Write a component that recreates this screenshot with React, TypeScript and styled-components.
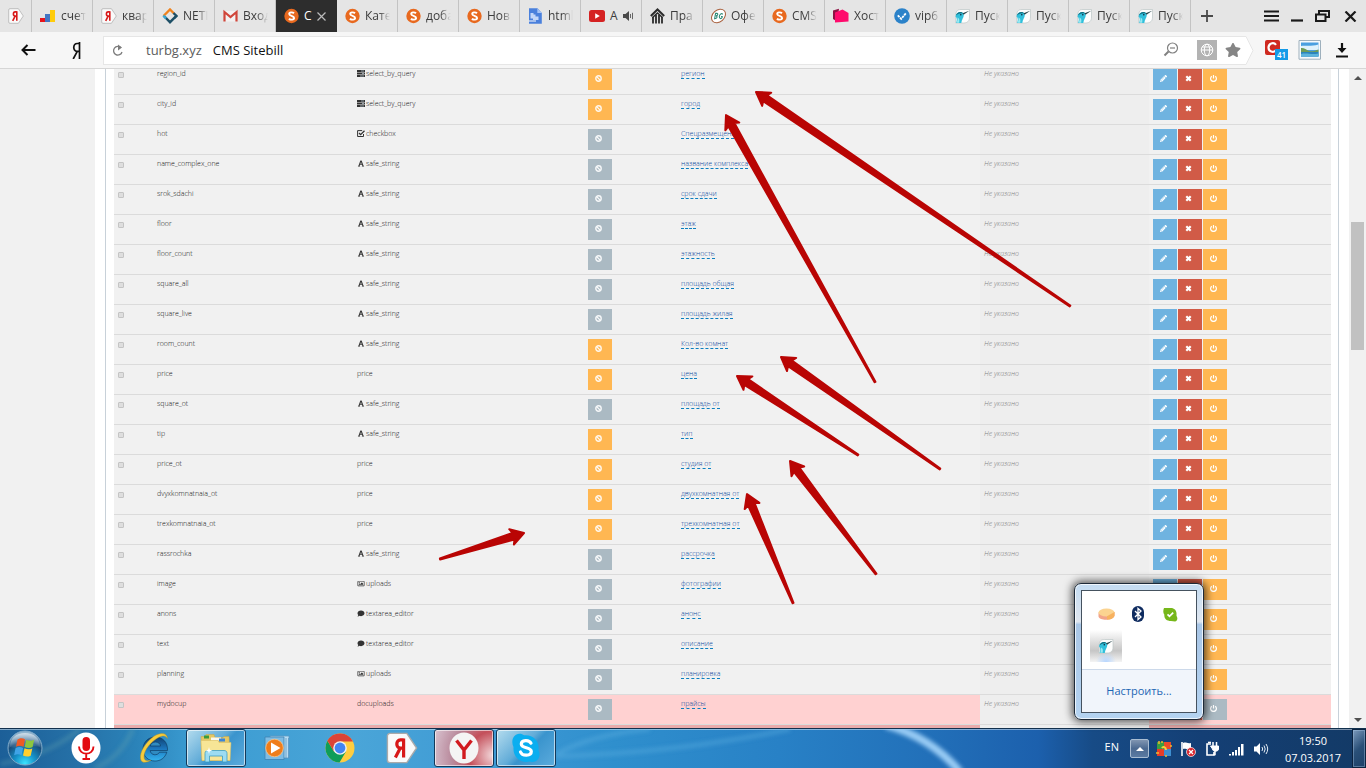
import React from 'react';
import styled, { createGlobalStyle, css } from 'styled-components';
import {
  FaPencilAlt,
  FaFont,
  FaRegImage,
  FaComment,
  FaStar,
} from 'react-icons/fa';

const GlobalStyle = createGlobalStyle`
  * { box-sizing: border-box; }
  body { margin: 0; overflow: hidden; background: #fff; }
  button, input { font: inherit; color: inherit; }
  button { border: 0; padding: 0; background: none; cursor: pointer; }
  svg { display: block; flex: none; }
`;

const uiFont = css`font-family: 'Open Sans', 'Noto Sans', sans-serif;`;

const Screen = styled.div`
  position: relative;
  display: flex;
  flex-direction: column;
  height: 100vh;
  overflow: hidden;
  ${uiFont}
`;

/* ---------- browser tabs ---------- */

const TabStrip = styled.header`
  display: flex;
  flex: none;
  height: 32px;
  background: #e5e5e5;
`;

const Tab = styled.button<{ $active?: boolean; $pinned?: boolean }>`
  display: flex;
  align-items: center;
  flex: none;
  gap: 5px;
  width: ${p => (p.$pinned ? 32 : 61)}px;
  padding-left: 8px;
  border-right: 1px solid ${p => (p.$active ? '#2d2d2d' : '#c3c3c3')};
  background: ${p => (p.$active ? '#2d2d2d' : 'transparent')};
  color: ${p => (p.$active ? '#fff' : '#3c3c3c')};
  font-size: 12px;
  line-height: 18px;
  text-align: left;
`;

const TabTitle = styled.span<{ $short?: boolean }>`
  width: ${p => (p.$short ? 8 : 30)}px;
  white-space: nowrap;
  mask-image: ${p => (p.$short ? 'none' : 'linear-gradient(90deg, #000 14px, transparent 25px)')};
`;

const StripButton = styled.button`
  display: flex;
  align-items: center;
  justify-content: center;
  width: 32px;
  height: 32px;
`;

const WindowControls = styled.div`
  display: flex;
  align-items: center;
  gap: 11px;
  margin-left: auto;
  padding-right: 6px;
`;

const IconButton = styled.button`
  display: flex;
  align-items: center;
  justify-content: center;
  flex: none;
`;

/* ---------- address bar ---------- */

const Toolbar = styled.div`
  display: flex;
  align-items: center;
  flex: none;
  height: 37px;
  padding: 0 16px 0 21px;
  border-bottom: 1px solid #d6d6d6;
  background: #f6f6f6;
`;

const BackButton = styled(IconButton)`width: 15px;`;
const HomeButton = styled(IconButton)`
  width: 10px;
  margin: 0 22px 0 35px;
`;

const AddressBar = styled.div`
  display: flex;
  align-items: center;
  flex: 1;
  height: 29px;
  padding: 0 5px 0 8px;
  border: 1px solid #e6e6e6;
  border-right: 0;
  background: #fff;
  font-size: 13px;
  line-height: 20px;
`;

const Host = styled.label`
  margin: 0 11px 0 22px;
  color: #5c5c5c;
`;

const AddressInput = styled.input`
  flex: 1;
  min-width: 0;
  padding: 0;
  border: 0;
  outline: 0;
  background: none;
  color: #111;
`;

const AddressTools = styled.div`
  display: flex;
  align-items: center;
  gap: 8px;
`;

const TranslateButton = styled(IconButton)`
  width: 20px;
  height: 20px;
  margin-left: 10px;
  background: #b3b3b3;
`;

const Extensions = styled.div`
  display: flex;
  align-items: center;
  gap: 10px;
  margin-left: 11px;
`;

const BadgeHolder = styled(IconButton)`
  position: relative;
  width: 23px;
  height: 20px;
  justify-content: flex-start;
  align-items: flex-start;
`;

const CountBadge = styled.span`
  position: absolute;
  right: 0;
  bottom: 0;
  width: 13px;
  height: 11px;
  background: #149ae8;
  color: #fff;
  font-size: 8px;
  font-weight: 600;
  line-height: 11px;
  text-align: center;
`;

/* ---------- page ---------- */

const Viewport = styled.main`
  display: flex;
  flex: 1;
  min-height: 0;
  overflow: hidden;
`;

const Sidebar = styled.aside`
  flex: none;
  width: 95px;
  background: #f1f1f1;
`;

const Panel = styled.section`
  flex: 1;
  margin: 0 10px;
  padding: 0 7px 0 8px;
  border: solid #c8d1d9;
  border-width: 0 1px;
  overflow: hidden;
`;

const Table = styled.table`
  width: 100%;
  margin-top: -5px;
  border-spacing: 0;
  table-layout: fixed;
  background: #f1f1f1;
  color: #111;
  font-size: 7px;
  font-weight: 300;
  line-height: 9px;
`;

const Col = styled.col<{ $w?: number }>`
  width: ${p => (p.$w ? p.$w + 'px' : 'auto')};
`;

type Tone = 'plain' | 'pink' | 'rose';
const toneColor: Record<Tone, string> = { plain: '#f1f1f1', pink: '#ffd1d1', rose: '#e9abab' };

const Row = styled.tr<{ $tone: Tone }>`
  background: ${p => toneColor[p.$tone]};
`;

const Cell = styled.td<{ $muted?: boolean }>`
  height: 30px;
  padding: 4px;
  border-top: 1px solid #dbdbdb;
  vertical-align: top;
  white-space: nowrap;
  background: ${p => (p.$muted ? '#eee' : 'transparent')};
`;

const RowCheck = styled.input`
  display: block;
  width: 6px;
  height: 6px;
  margin: 3px 0 0;
  appearance: none;
  border: 1px solid #c4c4c4;
  border-radius: 1px;
  background: #dedede;
`;

const FieldType = styled.span`
  display: flex;
  align-items: center;
  gap: 1px;
  svg { width: 8px; height: 7px; color: #333; }
`;

const EditLink = styled.a`
  display: inline-block;
  border-bottom: 1px dashed #0b7fc0;
  color: #0a479c;
  text-decoration: none;
`;

const Empty = styled.em`color: #808080;`;

const ButtonGroup = styled.div`
  display: flex;
  gap: 1px;
`;

const actionColor = { blue: '#6fb3e0', red: '#d15b47', orange: '#ffb752', grey: '#abbac3' };

const ActionButton = styled.button<{ $color: keyof typeof actionColor }>`
  display: flex;
  align-items: center;
  width: 24px;
  height: 21px;
  padding: 0 0 2px 7px;
  background: ${p => actionColor[p.$color]};
  color: #fff;
  svg { width: 7px; height: 7px; }
`;

const Scrollbar = styled.div`
  display: flex;
  flex-direction: column;
  align-items: center;
  flex: none;
  width: 17px;
  background: #f1f1f1;
`;

const ScrollButton = styled(IconButton)`
  width: 17px;
  height: 17px;
`;

const ScrollSpace = styled.div<{ $grow: number }>`flex: ${p => p.$grow} 1 0;`;

const ScrollThumb = styled.div`
  flex: 128 1 0;
  width: 13px;
  background: #c1c1c1;
`;

const Annotations = styled.svg`
  position: absolute;
  inset: 0;
  width: 100%;
  height: 100%;
  pointer-events: none;
`;

/* ---------- tray popup ---------- */

const TrayPopup = styled.div`
  position: absolute;
  right: 162px;
  bottom: 48px;
  width: 130px;
  height: 137px;
  padding: 6px;
  border: 1px solid #1d2a38;
  border-radius: 7px;
  background: linear-gradient(#c4dcf2, #dfe6ef 28%, #a9c6e6 30%, #b4d3f1);
  box-shadow: 0 0 9px 2px rgba(0, 0, 0, 0.65), inset 0 0 0 1px rgba(255, 255, 255, 0.75);
`;

const TrayInner = styled.div`
  display: flex;
  flex-direction: column;
  height: 100%;
  border: 1px solid #45525f;
  background: #fff;
`;

const TrayGrid = styled.div`
  display: grid;
  grid-template-columns: repeat(3, 32px);
  grid-auto-rows: 32px;
  flex: 1;
  padding: 7px 8px 0;
`;

const TrayItem = styled.button<{ $hot?: boolean }>`
  display: flex;
  align-items: center;
  justify-content: center;
  background: ${p =>
    p.$hot
      ? 'radial-gradient(circle at 50% 100%, #b7d6ff 0, transparent 28%), linear-gradient(#fff, #c6c6c6 65%, #f4f4f4)'
      : 'none'};
`;

const TrayFooter = styled.div`
  display: flex;
  align-items: center;
  justify-content: center;
  height: 43px;
  border-top: 1px solid #ccd9ea;
  background: #f1f5fb;
`;

const TrayLink = styled.a`
  color: #1c66b4;
  font-size: 11px;
  line-height: 16px;
  text-decoration: none;
`;

/* ---------- taskbar ---------- */

const Taskbar = styled.footer`
  position: relative;
  display: flex;
  flex: none;
  height: 40px;
  border-top: 1px solid #12304d;
  background: linear-gradient(90deg, #1c5f98 0, #2672a8 6%, #2b83b9 10%, #3a9bd1 14%, #4aa5d8 26%, #3b97d3 38%, #2f8fcd 45%, #2881c6 57%, #2270b9 68%, #1c60ad 76%, #174b86 80%, #143f75 88%, #133a66 100%);
  box-shadow: inset 0 1px rgba(255, 255, 255, 0.45);
  color: #fff;
`;

const TaskbarArt = styled.svg`
  position: absolute;
  inset: 0;
  width: 100%;
  height: 100%;
  pointer-events: none;
`;

const StartButton = styled(IconButton)`
  position: relative;
  width: 50px;
  height: 38px;
`;

const TaskButton = styled.button<{ $state?: 'open' | 'alert'; $first?: boolean }>`
  position: relative;
  display: flex;
  align-items: center;
  justify-content: center;
  width: ${p => (p.$first ? 72 : 60)}px;
  height: 38px;
  margin-right: 2px;
  ${p =>
    p.$state &&
    css`
      border: 1px solid #14395a;
      border-radius: 3px;
      box-shadow: inset 0 0 0 1px rgba(255, 255, 255, 0.6);
      background: ${p.$state === 'alert'
        ? 'radial-gradient(circle at 100% 70%, #f3d9dc 0, #c44f5a 38%, #b98a9c 65%, #d9c3d0)'
        : 'linear-gradient(135deg, #b4dcee 0, #62acd8 45%, #3a94cd 55%, #5cabdc)'};
    `}
`;

const Tray = styled.div`
  position: relative;
  display: flex;
  align-items: center;
  margin-left: auto;
  height: 39px;
`;

const Language = styled.button`
  margin: 0 11px 4px 0;
  font-size: 11px;
  line-height: 16px;
`;

const TrayToggle = styled(IconButton)`
  width: 19px;
  height: 19px;
  margin-right: 7px;
  border: 1px solid #a9bdd2;
  border-radius: 2px;
  background: linear-gradient(#8095b1, #4c6a91 50%, #5a7aa2);
`;

const StatusIcons = styled.div`
  display: flex;
  gap: 8px;
`;

const Clock = styled.time`
  width: 78px;
  margin-left: 5px;
  font-size: 11px;
  line-height: 17px;
  text-align: center;
`;

const ShowDesktop = styled.button`
  width: 14px;
  height: 39px;
  border: 1px solid #0b2340;
  background: linear-gradient(135deg, #7c9abc, #2a5078 50%, #1c4068);
  box-shadow: inset 0 0 0 1px rgba(170, 200, 230, 0.4);
`;

/* ---------- drawings ---------- */

const YandexTag = ({ size = 16 }: { size?: number }) => (
  <svg width={size} height={size} viewBox="0 0 16 16">
    <path d="M2 .7h8.4L15.3 8l-4.9 7.3H2A1.3 1.3 0 0 1 .7 14V2A1.3 1.3 0 0 1 2 .7z" fill="#fafafa" stroke="#aaa" strokeWidth=".7" />
    <path d="M8.800 3.200v9.600M8.800 3.900H7.200C4.800 4 4.800 8 7.200 8.100h1.600M7 8.300l-2.300 4.500" fill="none" stroke="#d81818" strokeWidth="1.600" />
  </svg>
);

const Bars = () => (
  <svg width="16" height="14" viewBox="0 0 16 14">
    <path d="M0 9h5v4H0z" fill="#e8141b" />
    <path d="M5 5h5v8H5z" fill="#4476c4" />
    <path d="M10 1h5v12h-5z" fill="#ffcc0a" />
  </svg>
);

const NetIcon = () => (
  <svg width="16" height="16" viewBox="0 0 16 16" fill="none" strokeWidth="2.400">
    <path d="M1.500 8 8 1.500l4 4" stroke="#f0831e" />
    <path d="M11.500 5 14.500 8l-2 2" stroke="#1d4f66" />
    <path d="M2.500 8.500 8 14.200l5.600-5.600" stroke="#1d4f66" />
    <path d="M1.300 7.600 4 10.300" stroke="#39a7d4" />
  </svg>
);

const Gmail = () => (
  <svg width="15" height="16" viewBox="0 0 15 16">
    <path d="M1.500 3h12v10.500h-12z" fill="#f3f1f1" />
    <path d="M1.500 13.500V4l6 5 6-5v9.500" fill="none" stroke="#d0453a" strokeWidth="2.200" />
  </svg>
);

const Sitebill = () => (
  <svg width="15" height="16" viewBox="0 0 15 16">
    <circle cx="7.500" cy="8" r="7.200" fill="#e8691f" />
    <path d="M10 5.300C8.600 4 5.200 4 5.200 6c0 2.200 4.900 1.600 4.900 4 0 2.100-3.700 2-5.200.7" fill="none" stroke="#fff" strokeWidth="1.900" />
  </svg>
);

const DocIcon = () => (
  <svg width="15" height="16" viewBox="0 0 15 16">
    <path d="M1 .3h8.500L13.800 5v10.700H1z" fill="#4a80dc" />
    <path d="M9.300.3V5h4.500z" fill="#a5c3f5" />
    <path d="M2.500 5h3v1.500h2v2h3V12H5v-1.500H2.500z" fill="#c3d6f8" />
    <path d="M1 12.500h7v1H1z" fill="#fff" />
  </svg>
);

const YouTube = () => (
  <svg width="16" height="12" viewBox="0 0 16 12">
    <rect width="16" height="12" rx="2.500" fill="#d52222" />
    <path d="M6.200 3.300 10.800 6l-4.600 2.700z" fill="#fff" />
  </svg>
);

const HouseIcon = () => (
  <svg width="15" height="16" viewBox="0 0 15 16" stroke="#2b2b2b" fill="none">
    <path d="M.8 8 7.500 1.500 14.200 8" strokeWidth="2" />
    <path d="M3 9v6.500M6 7v8.500M9 7v8.500M12 9v6.500" strokeWidth="1.800" />
    <path d="M2.500 9.500 7.500 5l5 4.500" strokeWidth="1.600" />
  </svg>
);

const BgIcon = () => (
  <svg width="15" height="16" viewBox="0 0 15 16">
    <ellipse cx="7.500" cy="8" rx="7.800" ry="5.800" transform="rotate(-42 7.500 8)" fill="#fff" stroke="#a85f3c" strokeWidth="1" />
    <path d="M3.600 10.800 4.600 5.400h1.300c1.400.2 1 2.300-.9 2.500 1.900.2 1.200 2.800-1.400 2.900zM11.800 6.300c-1.400-1.600-3.400.3-3.500 2.300 0 2.200 1.800 2.500 2.700 1.200l.2-1.200H10" fill="none" stroke="#2d8b78" strokeWidth="1.100" />
  </svg>
);

const HostIcon = () => (
  <svg width="16" height="16" viewBox="0 0 16 16">
    <path d="M0 2.500 6 .8 4 13.500 0 11z" fill="#8d1244" />
    <path d="M2 4.500 9.500 1.500 15.500 5v8.500L2 14.500z" fill="#ff0a6c" />
  </svg>
);

const CheckCloud = () => (
  <svg width="16" height="16" viewBox="0 0 16 16">
    <circle cx="8" cy="8" r="7.800" fill="#2b82c9" />
    <path d="m3.800 7.300 3.400 3.600 5-6" fill="none" stroke="#fff" strokeWidth="1.800" strokeDasharray="2.500 .7" />
  </svg>
);

const Bird = ({ size = 15 }: { size?: number }) => (
  <svg width={size} height="16" viewBox="0 0 15 16">
    <path d="M6 1.500h8.500V9c0 4-2 6-6 6H.7V7.500c0-4 1.500-6 5.300-6z" fill="#fdfdfd" stroke="#bcc6c6" strokeWidth=".7" />
    <path d="M.5 8.500C.8 5.500 3 4 5.200 4 7.300 4 8.800 5.200 8.800 7c0 3-2.300 4.600-2.500 8H1.200C2 12 2.300 10 .5 8.500z" fill="#31bfdb" />
    <path d="M1 7.500C1.500 5.200 3.300 4 5.200 4c1.500 0 2.600.6 3.200 1.500C5.500 5 3 5.800 1 7.500z" fill="#156f80" />
    <path d="m7.500 5.200 6.700-2.400-5.600 4z" fill="#27454b" />
    <path d="M2.500 9.500c1.800.6 2.200 2.500 1.700 5.200l-2.500.1c.8-2 1-3.700.8-5.300z" fill="#9aeaf2" />
    <circle cx="5.800" cy="6.700" r=".8" fill="#123" />
  </svg>
);

const Speaker = () => (
  <svg width="12" height="10" viewBox="0 0 12 10">
    <path d="M0 3h2.500L6 0v10L2.500 7H0z" fill="#4a4a4a" />
    <path d="M7.500 3v4M9.500 1.800v6.400" fill="none" stroke="#666" />
  </svg>
);

const NetPicture = () => (
  <svg width="24" height="20" viewBox="0 0 24 20">
    <path d="M1 .5h21.500v18.700H1z" fill="#f7fafc" stroke="#9eb0bd" />
    <path d="M3 2.500h17.500v14H3z" fill="#4a9fe0" />
    <path d="M3 6c5-1 8 1 17.500-1.500V10H3z" fill="#dff1fb" />
    <path d="M3 8c3-.5 5 1.500 8 3 4 1 6-.5 9.500-1.500v2.500H3z" fill="#6f9c58" />
    <path d="M3 12h17.500v4.500H3z" fill="#2b84bd" />
    <path d="M3 14c6-1.500 10 1 17.500-.5v3H3z" fill="#5db4dc" />
  </svg>
);

const ComodoIcon = () => (
  <svg width="15" height="15" viewBox="0 0 15 15">
    <rect width="15" height="15" rx="2" fill="#cf2a20" />
    <path d="M11 4.800C8.500 1.500 3.500 3.500 3.500 7.500s5 6 7.500 2.700" fill="none" stroke="#fff" strokeWidth="2.200" />
  </svg>
);

const TypeStack = () => (
  <svg viewBox="0 0 8 7">
    <path d="M0 0h8v2H0zM0 2.500h8v2H0zM0 5h8v2H0z" fill="#333" />
    <path d="M4 1h3M5 3.500h2M3 6h4" stroke="#a9b8c0" strokeWidth=".8" />
  </svg>
);

const TypeCheck = () => (
  <svg viewBox="0 0 8 7" fill="none" stroke="#333">
    <path d="M6.500 4v2.500H.6V.6h4.600" />
    <path d="m2 3 1.600 1.600L7.500.8" strokeWidth="1.300" />
  </svg>
);

const BanIcon = () => (
  <svg viewBox="0 0 7 7" fill="none" stroke="#fff" opacity=".9">
    <circle cx="3.500" cy="3.500" r="2.700" strokeWidth="1.400" />
    <path d="m2 2 3 3" strokeWidth="1.100" />
  </svg>
);

const CrossIcon = () => (
  <svg viewBox="0 0 7 7"><path d="m1.300 1.300 4.400 4.400m0-4.400L1.300 5.700" stroke="#fff" strokeWidth="2.200" /></svg>
);

const PowerIcon = () => (
  <svg viewBox="0 0 7 7" fill="none" stroke="#fff">
    <path d="M1.800 1.200a2.900 2.900 0 1 0 3.400 0M3.500 0v3.500" strokeWidth="1.200" />
  </svg>
);

const Orb = () => (
  <svg width="36" height="36" viewBox="0 0 36 36">
    <defs>
      <radialGradient id="orb" cx=".5" cy=".95" r=".9">
        <stop offset="0" stopColor="#3be4ff" />
        <stop offset=".35" stopColor="#1591c8" />
        <stop offset=".7" stopColor="#174d7c" />
        <stop offset="1" stopColor="#8fb4cf" />
      </radialGradient>
      <linearGradient id="orbShine" x2="0" y2="1">
        <stop offset="0" stopColor="#fff" stopOpacity=".6" />
        <stop offset="1" stopColor="#fff" stopOpacity=".05" />
      </linearGradient>
    </defs>
    <circle cx="18" cy="18" r="17" fill="url(#orb)" stroke="#7fa9c8" />
    <path d="M3 17C3 8 9 3 18 3s15 5 15 14c-8-3-20 3-30 0z" fill="url(#orbShine)" />
    <path d="M10.500 9.500c3-1.700 5-1.500 7.500-.2l-1.500 7.400c-2.700-1.300-4.800-1.300-7.500 0z" fill="#ee5a24" />
    <path d="M19.200 9.800c3 1.300 5 1.400 8 0l-1.600 7.300c-2.800 1.300-5 1-7.900-.2z" fill="#8cc63f" />
    <path d="M8.600 18c2.700-1.300 5-1.300 7.500 0l-1.600 7.300c-2.500-1.300-4.500-1.400-7.400 0z" fill="#3fa3e6" />
    <path d="M17.500 18.300c2.800 1.300 5 1.300 7.800.1l-1.600 7.300c-2.800 1.300-4.900 1.100-7.700-.2z" fill="#ffcf2e" />
  </svg>
);

const Mic = () => (
  <svg width="30" height="32" viewBox="0 0 30 32">
    <ellipse cx="15" cy="16" rx="14.500" ry="15.500" fill="#fff" />
    <rect x="11.500" y="5" width="7.500" height="14" rx="3.700" fill="#e30b10" />
    <path d="M8 14.500c0 9.500 14.500 9.500 14.500 0M15.200 21.500v6M11.500 27h7.500" fill="none" stroke="#e30b10" strokeWidth="1.900" />
  </svg>
);

const Explorer9 = () => (
  <svg width="32" height="32" viewBox="0 0 32 32">
    <defs>
      <linearGradient id="ie" x2="0" y2="1">
        <stop offset="0" stopColor="#103f70" />
        <stop offset=".5" stopColor="#1c78bf" />
        <stop offset="1" stopColor="#35b4ee" />
      </linearGradient>
    </defs>
    <path d="M29.500 18.500H12.200c.4 5 7.400 5.600 9.300 1.700h7.300C27 26 22.500 29 17 29 10 29 5 24 5 17.300 5 10.500 10 5 17.200 5c7.800 0 12.700 5.500 12.300 13.500zM12.300 14h10.200c-.4-5.200-9.300-5.500-10.200 0z" fill="url(#ie)" stroke="#0c3358" strokeWidth=".6" />
    <path d="M29.500 6.500C29 1 23 0 16 4.200 8 9.500 1.500 20 2.500 26.500c.6 5 6 4.700 10.500 1.600C8.500 29.800 6 28.500 6 24.500 6 18 13 9.500 20 5.700c4.500-2.500 8-2.500 9.500.8z" fill="#f6cc3d" stroke="#b88d1c" strokeWidth=".4" />
  </svg>
);

const FolderStack = () => (
  <svg width="32" height="32" viewBox="0 0 32 32">
    <path d="M1 4.500h4l1-2h8l1 3h8l1-1h5l1 24H2z" fill="#e4c765" stroke="#c9a648" strokeWidth=".5" />
    <path d="M4 3.500h5v3H4z" fill="#3a9b3a" />
    <path d="M11 5.500h10v3H11z" fill="#f8f8f2" />
    <path d="M19 6.500h6v3h-6z" fill="#3d86d8" />
    <path d="M1 8.500h17l1 2h12l-1 18H2z" fill="#f7e596" stroke="#d8bc62" strokeWidth=".5" />
    <path d="M5 30v-8.500c0-2 1-3 3-3h16c2 0 3 1 3 3V30h-4.500v-6h-13v6z" fill="#9cdcf2" stroke="#3c9dc2" strokeWidth=".8" />
    <path d="m9 15 .7 2.800 2.800.7-2.800.7L9 22l-.7-2.800-2.800-.7 2.800-.7z" fill="#fff" />
  </svg>
);

const MediaPlayer = () => (
  <svg width="28" height="28" viewBox="0 0 28 28">
    <path d="M6 2h19v22H9z" fill="#b7dcf2" stroke="#5a9ac5" strokeWidth=".8" />
    <path d="M1 3h19v22.500H1z" fill="#7dbce4" stroke="#3e83b4" strokeWidth=".8" />
    <path d="M22 4v21M24.500 4v20" stroke="#4d8dbb" strokeWidth=".7" />
    <circle cx="10.500" cy="14" r="8.800" fill="#ef7d1a" stroke="#f8c68e" strokeWidth=".8" />
    <path d="M7 8.500 16.500 14 7 19.500z" fill="#fff" />
  </svg>
);

const Chrome = () => (
  <svg width="30" height="30" viewBox="0 0 30 30">
    <circle cx="15" cy="15" r="14.500" fill="#ffcd40" />
    <path d="M2.400 7.800A14.500 14.500 0 0 0 14.500 29.500L21 18.500 15 15l-6 3.500z" fill="#0f9d58" />
    <path d="M9 18.500 2.400 7.800A14.500 14.500 0 0 1 28 8.500H15z" fill="#db4437" />
    <circle cx="15" cy="15" r="6.800" fill="#f1f1f1" />
    <circle cx="15" cy="15" r="5.400" fill="#4285f4" />
  </svg>
);

const YandexBrowser = () => (
  <svg width="30" height="32" viewBox="0 0 30 32">
    <ellipse cx="15" cy="16" rx="14.500" ry="15.500" fill="#f4f4f4" />
    <path d="M7.500 8.500 15 18l7.500-9.500M15 17.500V27" fill="none" stroke="#d11a1f" strokeWidth="3.400" />
  </svg>
);

const Skype = () => (
  <svg width="30" height="30" viewBox="0 0 30 30">
    <path d="M8.500.8c2 0 3.500.7 4.600 1.500 7.700-1.100 14.700 4.500 14.500 12.500 0 1 0 1.700-.2 2.500 3.600 6.200-1.700 13.500-8.700 11.300C9.400 30.500 1.700 24 2.500 14 -.5 8 2.500.8 8.500.8z" fill="#0aaef0" />
    <path d="M20 10.200C18 6.300 10.300 6.800 10.300 11c0 4.800 10 2.700 10 7.500 0 4.700-9 5-10.800.5" fill="none" stroke="#fff" strokeWidth="3.200" strokeLinecap="round" />
  </svg>
);

/* ---------- data ---------- */

type TabData = { title: string; icon: React.ReactNode; active?: boolean; audio?: boolean };
const tabs: TabData[] = [
  { title: 'счет', icon: <Bars /> },
  { title: 'квар', icon: <YandexTag /> },
  { title: 'NETI', icon: <NetIcon /> },
  { title: 'Вход', icon: <Gmail /> },
  { title: 'С', icon: <Sitebill />, active: true },
  { title: 'Кате', icon: <Sitebill /> },
  { title: 'доба', icon: <Sitebill /> },
  { title: 'Нов', icon: <Sitebill /> },
  { title: 'html', icon: <DocIcon /> },
  { title: 'A', icon: <YouTube />, audio: true },
  { title: 'Пра', icon: <HouseIcon /> },
  { title: 'Офе', icon: <BgIcon /> },
  { title: 'CMS', icon: <Sitebill /> },
  { title: 'Хост', icon: <HostIcon /> },
  { title: 'vip6', icon: <CheckCloud /> },
  { title: 'Пуск', icon: <Bird /> },
  { title: 'Пуск', icon: <Bird /> },
  { title: 'Пуск', icon: <Bird /> },
  { title: 'Пуск', icon: <Bird /> },
];

const typeIcons: Record<string, React.ReactNode> = {
  select_by_query: <TypeStack />,
  checkbox: <TypeCheck />,
  safe_string: <FaFont />,
  uploads: <FaRegImage />,
  textarea_editor: <FaComment />,
};

type Field = { name: string; type: string; title: string; required?: boolean; tone?: Tone };
const fields: Field[] = [
  { name: 'region_id', type: 'select_by_query', title: 'регион', required: true },
  { name: 'city_id', type: 'select_by_query', title: 'город', required: true },
  { name: 'hot', type: 'checkbox', title: 'Спецразмещение' },
  { name: 'name_complex_one', type: 'safe_string', title: 'название комплекса' },
  { name: 'srok_sdachi', type: 'safe_string', title: 'срок сдачи' },
  { name: 'floor', type: 'safe_string', title: 'этаж' },
  { name: 'floor_count', type: 'safe_string', title: 'этажность' },
  { name: 'square_all', type: 'safe_string', title: 'площадь общая' },
  { name: 'square_live', type: 'safe_string', title: 'площадь жилая' },
  { name: 'room_count', type: 'safe_string', title: 'Кол-во комнат', required: true },
  { name: 'price', type: 'price', title: 'цена', required: true },
  { name: 'square_ot', type: 'safe_string', title: 'площадь от' },
  { name: 'tip', type: 'safe_string', title: 'тип', required: true },
  { name: 'price_ot', type: 'price', title: 'студия от', required: true },
  { name: 'dvyxkomnatnaia_ot', type: 'price', title: 'двухкомнатная от', required: true },
  { name: 'trexkomnatnaia_ot', type: 'price', title: 'трехкомнатная от', required: true },
  { name: 'rassrochka', type: 'safe_string', title: 'рассрочка' },
  { name: 'image', type: 'uploads', title: 'фотографии' },
  { name: 'anons', type: 'textarea_editor', title: 'анонс' },
  { name: 'text', type: 'textarea_editor', title: 'описание' },
  { name: 'planning', type: 'uploads', title: 'планировка' },
  { name: 'mydocup', type: 'docuploads', title: 'прайсы', tone: 'pink' },
];

/* tail x, tail y, tip x, tip y */
const arrows: [number, number, number, number][] = [
  [1070, 306, 756, 92],
  [875, 382, 726, 115],
  [940, 469, 781, 357],
  [858, 455, 737, 376],
  [876, 574, 790, 461],
  [793, 603, 747, 494],
  [440, 559, 524, 533],
];

const arrowPoints = ([tx, ty, hx, hy]: [number, number, number, number]) => {
  const len = Math.hypot(hx - tx, hy - ty);
  const ux = (hx - tx) / len;
  const uy = (hy - ty) / len;
  const at = (along: number, side: number) =>
    `${(tx + ux * along - uy * side).toFixed(1)},${(ty + uy * along + ux * side).toFixed(1)}`;
  return [
    at(0, 0.5), at(len - 11, 3.5), at(len - 13, 8), at(len, 0), at(len - 13, -8), at(len - 11, -3.5), at(0, -0.5),
  ].join(' ');
};

const FieldRow = ({ field }: { field: Field }) => (
  <Row $tone={field.tone ?? 'plain'}>
    <Cell><RowCheck type="checkbox" aria-label={field.name} /></Cell>
    <Cell>{field.name}</Cell>
    <Cell><FieldType>{typeIcons[field.type]}{field.type}</FieldType></Cell>
    <Cell>
      <ActionButton $color={field.required ? 'orange' : 'grey'} aria-label="Обязательное"><BanIcon /></ActionButton>
    </Cell>
    <Cell><EditLink href="#">{field.title}</EditLink></Cell>
    <Cell $muted><Empty>Не указано</Empty></Cell>
    <Cell>
      <ButtonGroup>
        <ActionButton $color="blue" aria-label="Изменить"><FaPencilAlt /></ActionButton>
        <ActionButton $color="red" aria-label="Удалить"><CrossIcon /></ActionButton>
        <ActionButton $color={field.tone ? 'grey' : 'orange'} aria-label="Включить"><PowerIcon /></ActionButton>
      </ButtonGroup>
    </Cell>
  </Row>
);

export default function App() {
  return (
    <Screen>
      <GlobalStyle />
      <TabStrip>
        <Tab $pinned aria-label="Яндекс"><YandexTag /></Tab>
        {tabs.map((t, i) => (
          <Tab key={i} $active={t.active}>
            {t.icon}
            <TabTitle $short={t.active || t.audio}>{t.title}</TabTitle>
            {t.active && (
              <svg width="9" height="9" viewBox="0 0 9 9"><path d="m.5.5 8 8m0-8-8 8" stroke="#bbb" strokeWidth="1.200" /></svg>
            )}
            {t.audio && <Speaker />}
          </Tab>
        ))}
        <StripButton aria-label="Новая вкладка">
          <svg width="12" height="12" viewBox="0 0 12 12"><path d="M6 0v12M0 6h12" stroke="#4a4a4a" strokeWidth="1.800" /></svg>
        </StripButton>
        <WindowControls>
          <IconButton aria-label="Меню">
            <svg width="15" height="12" viewBox="0 0 15 12"><path d="M0 1.500h15M0 6h15M0 10.500h15" stroke="#1a1a1a" strokeWidth="2.200" /></svg>
          </IconButton>
          <IconButton aria-label="Свернуть">
            <svg width="14" height="12" viewBox="0 0 14 12"><path d="M1 10.500h12" stroke="#1a1a1a" strokeWidth="2.200" /></svg>
          </IconButton>
          <IconButton aria-label="Развернуть">
            <svg width="15" height="12" viewBox="0 0 15 12" fill="none" stroke="#1a1a1a" strokeWidth="2">
              <path d="M4 4V1h10v6h-3M1 4.500h9.500V11H1z" />
            </svg>
          </IconButton>
          <IconButton aria-label="Закрыть">
            <svg width="19" height="11" viewBox="0 0 19 11"><path d="m4.500.5 10 10m0-10-10 10" stroke="#1a1a1a" strokeWidth="2.200" /></svg>
          </IconButton>
        </WindowControls>
      </TabStrip>

      <Toolbar>
        <BackButton aria-label="Назад">
          <svg width="15" height="12" viewBox="0 0 15 12" fill="none" stroke="#111" strokeWidth="2"><path d="M14.500 6H1.500M6.500 1l-5 5 5 5" /></svg>
        </BackButton>
        <HomeButton aria-label="Яндекс">
          <svg width="9" height="17" viewBox="0 0 9 17" fill="none" stroke="#111" strokeWidth="1.700">
            <path d="M7.500 0v17M7.500 1.500H5.300C.8 1.500.5 9.300 5 9.300h2.500M5.300 9.300 1.200 17" />
          </svg>
        </HomeButton>
        <AddressBar>
          <IconButton aria-label="Обновить">
            <svg width="12" height="13" viewBox="0 0 12 13" fill="none" stroke="#7c7c7c" strokeWidth="1.300">
              <path d="M9 3.800A4.300 4.300 0 1 0 10 8" /><path d="M6 .5v6l4-3z" fill="#7c7c7c" stroke="none" />
            </svg>
          </IconButton>
          <Host htmlFor="address">turbg.xyz</Host>
          <AddressInput id="address" defaultValue="CMS Sitebill" />
          <AddressTools>
            <IconButton aria-label="Масштаб">
              <svg width="16" height="16" viewBox="0 0 16 16" fill="none" stroke="#808080" strokeWidth="1.200">
                <circle cx="9.500" cy="6" r="5" /><path d="M7 6h5" /><path d="M5.500 9.500 1.500 13.500" strokeWidth="2" />
              </svg>
            </IconButton>
            <TranslateButton aria-label="Перевести">
              <svg width="14" height="14" viewBox="0 0 14 14" fill="none" stroke="#fff">
                <circle cx="7" cy="7" r="5.800" /><ellipse cx="7" cy="7" rx="2.700" ry="5.800" /><path d="M1.200 7h11.600M2 4h10" />
              </svg>
            </TranslateButton>
            <IconButton aria-label="В закладки"><FaStar size={16} color="#858585" /></IconButton>
          </AddressTools>
        </AddressBar>
        <svg width="8" height="29" viewBox="0 0 8 29"><path d="M0 .5 7 14.500 0 28.500" fill="#fff" stroke="#e6e6e6" /></svg>
        <Extensions>
          <BadgeHolder aria-label="Расширение"><ComodoIcon /><CountBadge>41</CountBadge></BadgeHolder>
          <IconButton aria-label="Картинки"><NetPicture /></IconButton>
          <IconButton aria-label="Загрузки">
            <svg width="18" height="15" viewBox="0 0 18 15"><path d="M10 0v7" stroke="#111" strokeWidth="2.200" /><path d="M5.500 5h9L10 10zM4 12.500h12v2H4z" fill="#111" /></svg>
          </IconButton>
        </Extensions>
      </Toolbar>

      <Viewport>
        <Sidebar />
        <Panel>
          <Table>
            <colgroup>
              <Col $w={39} /><Col $w={200} /><Col $w={231} /><Col $w={93} /><Col /><Col $w={169} /><Col $w={182} />
            </colgroup>
            <tbody>
              {fields.map(f => <FieldRow key={f.name} field={f} />)}
              <Row $tone="rose">
                <Cell /><Cell /><Cell /><Cell /><Cell /><Cell $muted /><Cell />
              </Row>
            </tbody>
          </Table>
        </Panel>
        <Scrollbar>
          <ScrollButton aria-label="Вверх"><svg width="8" height="4" viewBox="0 0 8 4"><path d="M0 4 4 0l4 4z" fill="#505050" /></svg></ScrollButton>
          <ScrollSpace $grow={136} />
          <ScrollThumb />
          <ScrollSpace $grow={361} />
          <ScrollButton aria-label="Вниз"><svg width="8" height="4" viewBox="0 0 8 4"><path d="m0 0 4 4 4-4z" fill="#505050" /></svg></ScrollButton>
        </Scrollbar>
      </Viewport>

      <Annotations>
        {arrows.map((a, i) => (
          <polygon key={i} points={arrowPoints(a)} fill="#b90504" stroke="#b90504" strokeWidth="2" strokeLinejoin="round" />
        ))}
      </Annotations>

      <Taskbar>
        <TaskbarArt viewBox="0 0 1366 40" preserveAspectRatio="none">
          <defs><filter id="soft"><feGaussianBlur stdDeviation="2" /></filter></defs>
          <g filter="url(#soft)" fill="none">
            <path d="M886 -4Q930 8 960 44" stroke="#9accf5" strokeWidth="8" />
            <path d="M556 26Q590 6 650 0M556 28Q680 24 790 0" stroke="#5db0e2" strokeWidth="4" opacity=".5" />
            <path d="M95 40Q120 30 133 0M0 36Q50 26 80 0" stroke="#64a6b0" strokeWidth="4" opacity=".4" />
          </g>
        </TaskbarArt>
        <StartButton aria-label="Пуск"><Orb /></StartButton>
        <TaskButton $first aria-label="Голосовой поиск"><Mic /></TaskButton>
        <TaskButton aria-label="Internet Explorer"><Explorer9 /></TaskButton>
        <TaskButton $state="open" aria-label="Проводник"><FolderStack /></TaskButton>
        <TaskButton aria-label="Проигрыватель"><MediaPlayer /></TaskButton>
        <TaskButton aria-label="Chrome"><Chrome /></TaskButton>
        <TaskButton aria-label="Яндекс"><YandexTag size={32} /></TaskButton>
        <TaskButton $state="alert" aria-label="Яндекс.Браузер"><YandexBrowser /></TaskButton>
        <TaskButton $state="open" aria-label="Skype"><Skype /></TaskButton>
        <Tray>
          <Language>EN</Language>
          <TrayToggle aria-label="Скрытые значки"><svg width="8" height="4" viewBox="0 0 8 4"><path d="M0 4 4 0l4 4z" fill="#fff" /></svg></TrayToggle>
          <StatusIcons>
            <svg width="16" height="16" viewBox="0 0 16 16">
              <path d="M1 1h7v7H1z" fill="#3b9e42" /><path d="M8 1h7v7H8z" fill="#ea4b2a" /><path d="M1 8h7v7H1z" fill="#e63c28" /><path d="M8 8h7v7H8z" fill="#3e8fd0" />
              <path d="M3 0v3M6 0v2M0 12h3M10 14v2M14 5h2" stroke="#f0b92d" strokeWidth="1.500" />
              <path d="M6 7c1-2 4-1 4 2" stroke="#f7d13a" strokeWidth="2" fill="none" />
            </svg>
            <svg width="16" height="16" viewBox="0 0 16 16">
              <path d="M2 1v14" stroke="#fff" strokeWidth="1.600" /><path d="M3 2c3-1.500 4 1 8 0v6c-4 1.500-5-1-8 0z" fill="#fff" />
              <circle cx="11" cy="11" r="4.500" fill="#d8242c" stroke="#fff" strokeWidth=".7" /><path d="m9 9 4 4m0-4-4 4" stroke="#fff" strokeWidth="1.300" />
            </svg>
            <svg width="16" height="16" viewBox="0 0 16 16" fill="none" stroke="#fff">
              <path d="M7 3H3v11h7v-3" strokeWidth="1.600" /><path d="M4 1.500h3" strokeWidth="1.600" />
              <path d="M6.500 5h8v3c0 3-6 3-6 0z" fill="#fff" /><path d="M9 1v4M12.500 1v4M11 10v3.500H9" strokeWidth="1.500" />
            </svg>
            <svg width="17" height="16" viewBox="0 0 17 16">
              <path d="M1 13h2v1.500H1zM4 11h2v3.500H4zM7 9h2v5.500H7zM10 6h2v8.500h-2zM13 3h2.500v11.500H13z" fill="#fff" />
            </svg>
            <svg width="16" height="16" viewBox="0 0 16 16">
              <path d="M1 5.500h2.500L7 2v12l-3.500-3.500H1z" fill="#fff" />
              <path d="M9 6q1.300 2 0 4M11 4.500q2.400 3.500 0 7M13 3q3.400 5 0 10" fill="none" stroke="#e6eef6" />
            </svg>
          </StatusIcons>
          <Clock>19:50<br />07.03.2017</Clock>
          <ShowDesktop aria-label="Рабочий стол" />
        </Tray>
      </Taskbar>

      <TrayPopup>
        <TrayInner>
          <TrayGrid>
            <TrayItem aria-label="Диск">
              <svg width="17" height="13" viewBox="0 0 17 13">
                <path d="M.5 4.500v4c1 4.500 15 4.500 16-1V4z" fill="#f2a48a" />
                <ellipse cx="8.500" cy="4.500" rx="8" ry="4" fill="#fbd390" /><path d="M9 8.300 16.500 4v4c-1.500 3-4.500 3.500-7.500 3.500z" fill="#f7b25e" />
              </svg>
            </TrayItem>
            <TrayItem aria-label="Bluetooth">
              <svg width="12" height="16" viewBox="0 0 12 16"><rect width="12" height="16" rx="6" fill="#0f2c60" /><path d="m3 5 6 6-3 2.500v-11L9 5l-6 6" fill="none" stroke="#fff" strokeWidth="1.300" /></svg>
            </TrayItem>
            <TrayItem aria-label="Skype">
              <svg width="15" height="15" viewBox="0 0 15 15"><path d="M1 1h6c3-.3 6 1 6.500 5v3c1.500 2 1 5-1.500 5.500L8 14c-4 0-7-2-6.700-6.500C0 6 0 3 1 1z" fill="#76b71a" /><path d="m4.500 7.300 2 2 3.700-3.600" fill="none" stroke="#fff" strokeWidth="1.700" /></svg>
            </TrayItem>
            <TrayItem $hot aria-label="Punto"><Bird size={16} /></TrayItem>
          </TrayGrid>
          <TrayFooter><TrayLink href="#">Настроить...</TrayLink></TrayFooter>
        </TrayInner>
      </TrayPopup>
    </Screen>
  );
}
